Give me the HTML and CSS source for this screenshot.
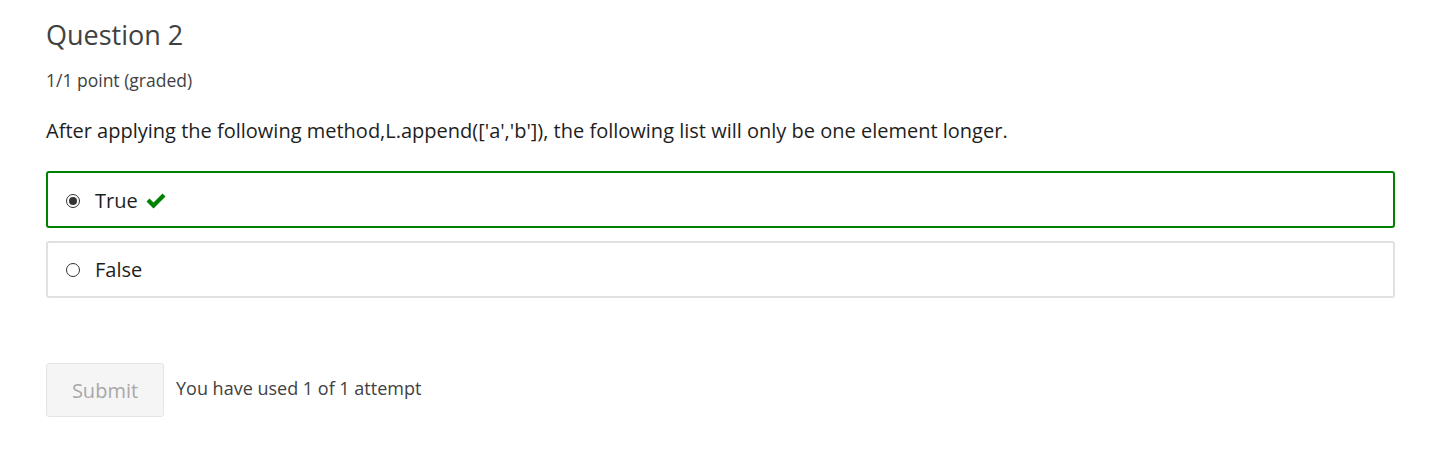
FILE: index.html
```html
<!DOCTYPE html>
<html>
<head>
<meta charset="utf-8">
<link rel="stylesheet" href="styles.css">
</head>
<body>
<div class="problem">
  <h2 class="title">Question 2</h2>
  <div class="points">1/1 point (graded)</div>
  <p class="prompt">After applying the following method,L.append(['a','b']), the following list will only be one element longer.</p>
  <div class="choices">
    <label class="choice correct">
      <span class="radio checked"></span>
      <span class="label">True</span>
      <svg class="check" width="22" height="18" viewBox="0 0 22 18"><path d="M1.5 9.5 L4.5 6.5 L8.5 10.5 L17.5 1.5 L20.5 4.5 L8.5 16.5 Z" fill="#008100"/></svg>
    </label>
    <label class="choice">
      <span class="radio"></span>
      <span class="label">False</span>
    </label>
  </div>
  <div class="actions">
    <button class="submit" disabled>Submit</button>
    <span class="attempts">You have used 1 of 1 attempt</span>
  </div>
</div>
</body>
</html>
```

FILE: styles.css
```css
html, body {
  margin: 0;
  padding: 0;
  background: #fff;
}
body {
  font-family: "Open Sans", "Liberation Sans", sans-serif;
  color: #313131;
}
.problem {
  padding: 17px 34px 0 46px;
}
.title {
  margin: 0;
  font-size: 27px;
  font-weight: 400;
  line-height: 36px;
  color: #414141;
}
.points {
  margin-top: 15px;
  font-size: 17.5px;
  line-height: 24px;
  color: #414141;
}
.prompt {
  margin: 25px 0 0 0;
  font-size: 20px;
  line-height: 28px;
  color: #1e1e1e;
}
.choices {
  margin-top: 26px;
  display: flex;
  flex-direction: column;
  gap: 13px;
}
.choice {
  display: flex;
  align-items: center;
  height: 57px;
  box-sizing: border-box;
  border: 2px solid #e1e1e1;
  border-radius: 3px;
  padding-left: 18px;
  font-size: 20px;
  color: #1e1e1e;
}
.choice.correct {
  border-color: #008100;
  padding-top: 2px;
}
.radio {
  width: 14px;
  height: 14px;
  box-sizing: border-box;
  border: 1px solid #333;
  border-radius: 50%;
  margin-right: 15px;
  position: relative;
  background: #fff;
}
.radio.checked::after {
  content: "";
  position: absolute;
  left: 2px;
  top: 2px;
  width: 8px;
  height: 8px;
  border-radius: 50%;
  background: #333;
}
.label {
  line-height: 26px;
}
.check {
  margin-left: 7px;
  margin-top: 1px;
}
.actions {
  margin-top: 65px;
  display: flex;
  align-items: center;
  gap: 12px;
}
.submit {
  width: 118px;
  height: 54px;
  border: 1px solid #e4e4e4;
  border-radius: 3px;
  background: #f5f5f5;
  color: #a8a8a8;
  font-family: "Open Sans", "Liberation Sans", sans-serif;
  font-size: 20px;
  padding: 0;
}
.attempts {
  font-size: 18px;
  color: #414141;
  margin-top: -4px;
}
```
